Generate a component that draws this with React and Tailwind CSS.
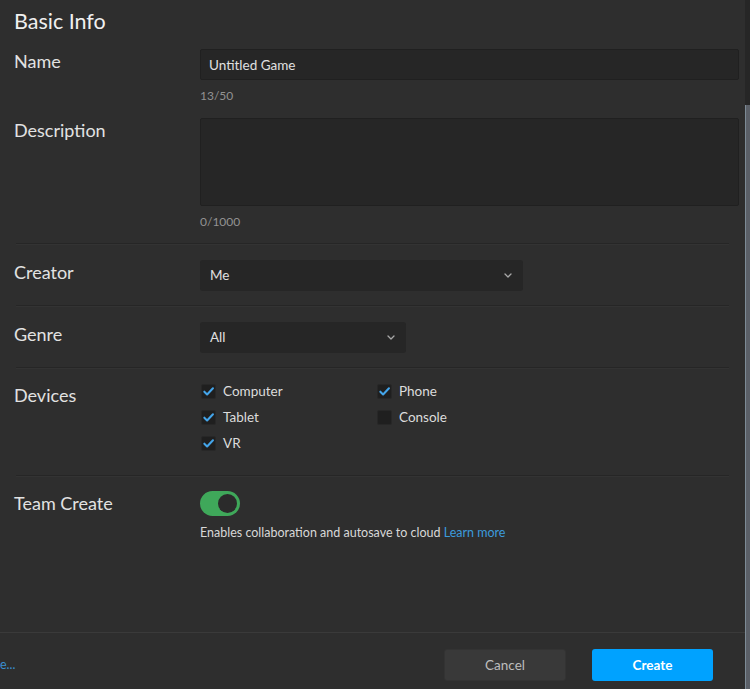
import { useState } from "react";

const font = { fontFamily: "Lato, 'Open Sans', sans-serif" };

function Chevron() {
  return (
    <svg className="w-[8px] h-[5px] text-[#a8a8a8]" viewBox="0 0 8 5" fill="none">
      <path d="M1 1l3 3 3-3" stroke="currentColor" strokeWidth="1.3" strokeLinecap="round" strokeLinejoin="round" />
    </svg>
  );
}

function Select({ value, width }) {
  return (
    <div
      className={`${width} h-[31px] flex items-center justify-between pl-[10px] pr-[11px] bg-[#262626] rounded-[3px] text-[13.5px] text-[#e0e0e0]`}
    >
      <span>{value}</span>
      <Chevron />
    </div>
  );
}

function Check({ label, checked }) {
  return (
    <div className="h-[26px] flex items-start gap-[7px]">
      <div className="w-[15px] h-[15px] mt-[1px] rounded-[2px] bg-[#1f1f1f] border border-[#272727] flex items-center justify-center">
        {checked && (
          <svg className="w-[13px] h-[13px]" viewBox="0 0 14 14" fill="none">
            <path d="M2.5 7.2l3 3L11.8 3.5" stroke="#44a5ea" strokeWidth="2.2" strokeLinecap="round" strokeLinejoin="round" />
          </svg>
        )}
      </div>
      <span className="text-[13.5px] leading-[17px] text-[#dcdcdc]">{label}</span>
    </div>
  );
}

function Row({ label, children, className = "" }) {
  return (
    <div className={`flex ${className}`}>
      <div className="w-[200px] shrink-0 pl-[14px] text-[18px] leading-[24px] text-[#e2e2e2]">{label}</div>
      <div className="flex-1 pr-[6px]">{children}</div>
    </div>
  );
}

function Divider() {
  return <div className="ml-[16px] mr-[16px] h-[2px] border-t border-[#262626] border-b border-b-[#333333]" />;
}

export default function App() {
  const [teamCreate, setTeamCreate] = useState(true);

  return (
    <div className="h-[689px] w-[750px] flex bg-[#2e2e2e] overflow-hidden" style={font}>
      <div className="flex-1 flex flex-col">
        <div className="flex-1">
          <h2 className="pl-[14px] pt-[8px] h-[49px] text-[21.5px] leading-[26px] text-[#f0f0f0]">Basic Info</h2>

          <Row label="Name">
            <div className="h-[31px] flex items-center px-[8px] pt-[2px] bg-[#262626] border border-[#202020] rounded-[2px] text-[13.5px] text-[#e0e0e0]">
              Untitled Game
            </div>
            <div className="mt-[8px] h-[16px] text-[12px] leading-[16px] text-[#929292]">13/50</div>
          </Row>

          <Row label="Description" className="mt-[14px]">
            <div className="h-[88px] bg-[#262626] border border-[#202020] rounded-[2px]" />
            <div className="mt-[8px] h-[16px] text-[12px] leading-[16px] text-[#929292]">0/1000</div>
          </Row>

          <div className="mt-[13px]">
            <Divider />
          </div>

          <Row label="Creator" className="pt-[15px] pb-[14px]">
            <Select value="Me" width="w-[323px]" />
          </Row>
          <Divider />

          <Row label="Genre" className="pt-[15px] pb-[14px]">
            <Select value="All" width="w-[206px]" />
          </Row>
          <Divider />

          <Row label="Devices" className="pt-[14px] pb-[14px]">
            <div className="grid grid-cols-[176px_1fr] pl-[1px]">
              <Check label="Computer" checked />
              <Check label="Phone" checked />
              <Check label="Tablet" checked />
              <Check label="Console" checked={false} />
              <Check label="VR" checked />
            </div>
          </Row>
          <Divider />

          <Row label="Team Create" className="pt-[14px]">
            <button
              type="button"
              onClick={() => setTeamCreate(!teamCreate)}
              className={`w-[40px] h-[25px] rounded-full p-[3px] flex ${teamCreate ? "bg-[#3fa85a] justify-end" : "bg-[#555] justify-start"}`}
            >
              <span className="w-[19px] h-[19px] rounded-full bg-[#2b2b2b]" />
            </button>
            <p className="mt-[8px] text-[12.5px] leading-[18px] text-[#d8d8d8]">
              Enables collaboration and autosave to cloud{" "}
              <a className="text-[#3c9bdc]">Learn more</a>
            </p>
          </Row>
        </div>

        <div className="h-[57px] border-t border-[#3a3a3a] flex items-start pt-[16px]">
          <a className="mt-[7px] text-[12.5px] leading-[18px] text-[#3a8fd0]">e...</a>
          <div className="ml-auto flex gap-[26px] pr-[32px]">
            <button className="w-[122px] h-[32px] rounded-[3px] bg-[#393939] border border-[#333] text-[13.5px] text-[#bdbdbd]">
              Cancel
            </button>
            <button className="w-[121px] h-[32px] rounded-[3px] bg-[#00a2ff] text-[13.5px] font-bold text-white">
              Create
            </button>
          </div>
        </div>
      </div>

      {/* scrollbar */}
      <div className="w-[5px] flex flex-col bg-[#262626]">
        <div className="h-[105px]" />
        <div className="flex-1 bg-[#5b6068] border-l border-[#7d8b96]" />
      </div>
    </div>
  );
}
